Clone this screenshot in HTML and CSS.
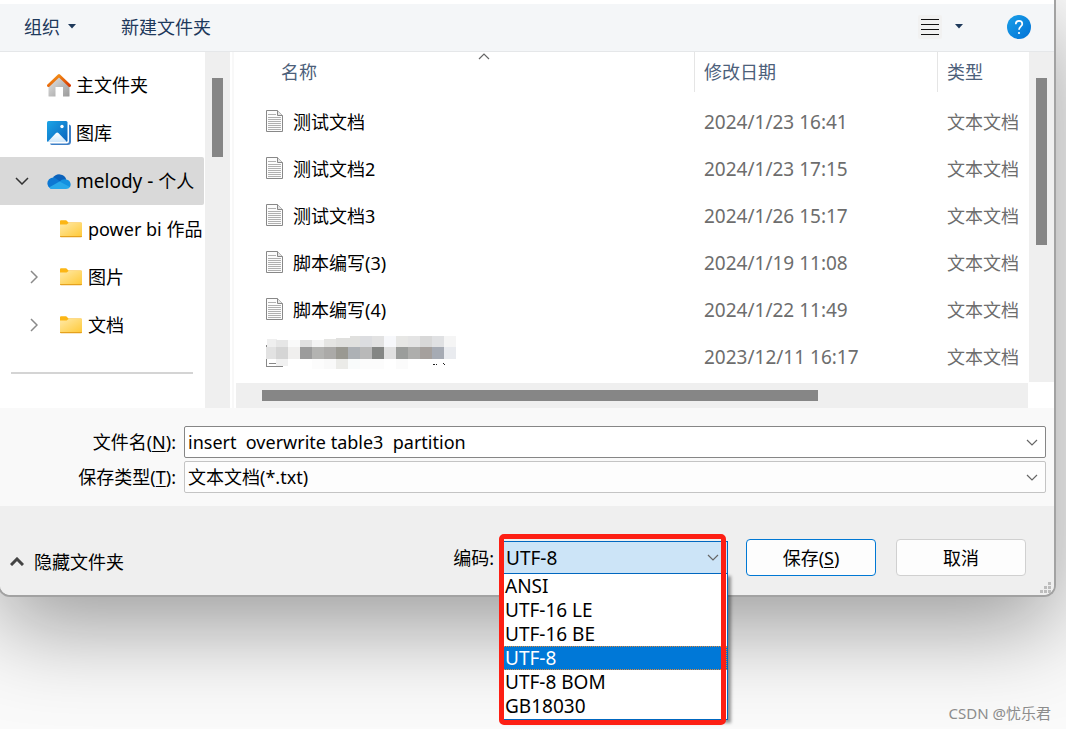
FILE: index.html
```html
<!DOCTYPE html>
<html lang="zh-CN">
<head>
<meta charset="utf-8">
<title>另存为</title>
<link rel="stylesheet" href="styles.css">
</head>
<body>
<svg class="defs" aria-hidden="true">
  <defs>
    <linearGradient id="gFolder" x1="0" y1="0" x2="1" y2="1"><stop offset="0" stop-color="#ffe9a6"/><stop offset="1" stop-color="#ffca3a"/></linearGradient>
    <linearGradient id="gRoof" x1="0" y1="0" x2="1" y2="1"><stop offset="0" stop-color="#f9a01b"/><stop offset="1" stop-color="#d83b01"/></linearGradient>
    <linearGradient id="gWall" x1="0" y1="0" x2="1" y2="1"><stop offset="0" stop-color="#e6e6e6"/><stop offset="1" stop-color="#9a9a9a"/></linearGradient>
    <linearGradient id="gBlue" x1="0" y1="0" x2="1" y2="1"><stop offset="0" stop-color="#1ba4e6"/><stop offset="1" stop-color="#0a63bd"/></linearGradient>
    <linearGradient id="gHelp" x1="0" y1="0" x2="1" y2="1"><stop offset="0" stop-color="#1ba0e8"/><stop offset="1" stop-color="#0071d6"/></linearGradient>
    <linearGradient id="gSnow" x1="0" y1="0" x2="0" y2="1"><stop offset="0" stop-color="#ffffff"/><stop offset="1" stop-color="#cfe8fb"/></linearGradient>
    <symbol id="folder" viewBox="0 0 22 18">
      <path d="M0 1.2Q0 .3 1 .3H6.2L8.5 2.4H21Q22 2.4 22 3.4V8H0Z" fill="#fcb615"/>
      <path d="M0 4.6H6.6L8.6 3.1H22V16H0Z" fill="url(#gFolder)"/>
      <path d="M0 16H22V16.4Q22 17.2 21 17.2H1Q0 17.2 0 16.4Z" fill="#e5a11d"/>
    </symbol>
    <symbol id="doc" viewBox="0 0 18 23">
      <path d="M1.5 .5H12.500L17.500 5.500V21.500H1.500Z" fill="#fcfcfc" stroke="#888"/>
      <path d="M12.500 .5V5.500H17.500" fill="#e4e4e4" stroke="#888"/>
      <path d="M3 4.500H11M3 7.500H16M3 9.500H16M3 11.500H16M3 13.500H16M3 15.500H16M3 17.500H16M3 19.500H16" stroke="#b0b0b0"/>
    </symbol>
  </defs>
</svg>

<main class="dialog">
  <header class="toolbar">
    <button class="tool" type="button">组织<svg class="caret" viewBox="0 0 8 5"><path d="M0 0H8L4 4.6Z"/></svg></button>
    <button class="tool new-folder" type="button">新建文件夹</button>
    <button class="tool view" type="button" aria-label="视图">
      <svg class="view-icon" viewBox="0 0 24 24"><rect width="24" height="24" rx="2" fill="#f1f1f1"/><path d="M3 4.5H21M3 9.5H21M3 14.5H21M3 19.5H21" stroke="#111"/></svg>
      <svg class="caret" viewBox="0 0 8 5"><path d="M0 0H8L4 4.6Z"/></svg>
    </button>
    <button class="tool help" type="button" aria-label="帮助">
      <svg class="help-icon" viewBox="0 0 24 24"><circle cx="12" cy="12" r="12" fill="url(#gHelp)"/><path d="M8.8 9.3C8.8 7 10.2 5.9 12 5.9S15.3 7 15.3 8.9C15.3 11.3 12 11.6 12 14.8" fill="none" stroke="#fff" stroke-width="1.7"/><circle cx="12" cy="18" r="1.1" fill="#fff"/></svg>
    </button>
  </header>

  <section class="browser">
    <nav class="tree">
      <a class="node" href="#"><span class="arrow"></span>
        <svg class="node-icon" viewBox="0 0 24 24"><path d="M1.500 12L12 2.500L22.500 12V23Q22.500 23.500 22 23.500H16V14H8.500V23.500H2Q1.500 23.500 1.500 23Z" fill="url(#gWall)"/><path d="M1.500 12.500L12 2.500L22.500 12.500" fill="none" stroke="url(#gRoof)" stroke-width="3" stroke-linejoin="round" stroke-linecap="round"/></svg>主文件夹</a>
      <a class="node" href="#"><span class="arrow"></span>
        <svg class="node-icon" viewBox="0 0 24 24"><path d="M22 3.500Q24 4 24 5.500V20.500Q24 24 20.500 24H5Q3.500 24 3 22.500H19.500Q22 22.500 22 20Z" fill="#3d7fc6"/><rect width="20.500" height="21" rx="1.500" fill="url(#gBlue)"/><path d="M1 20.500L9 12Q10.200 10.800 11.400 12L19.600 20.500Q19.300 21 18.500 21H2Q1.300 21 1 20.500Z" fill="url(#gSnow)"/><circle cx="15" cy="5.500" r="1.700" fill="#fff"/></svg>图库</a>
      <a class="node selected" href="#"><span class="arrow"><svg class="down" viewBox="0 0 14 8"><path d="M1 1L7 7L13 1"/></svg></span>
        <svg class="node-icon" viewBox="0 0 24 24"><path d="M6 9A7.300 7.300 0 0 1 19.300 10.500L12 15Z" fill="#0b62bb"/><path d="M5.500 20A5.700 5.700 0 1 1 9 9.400L19 17Z" fill="#0d78d3"/><path d="M12.500 12.500Q15.500 9.700 19 10.500A5 5 0 0 1 23 18L16 18Z" fill="#1490df"/><path d="M2 18.500L12.500 12.500L23 18Q21.800 20 19 20H5.500Q3.300 20 2 18.500Z" fill="#28a8ea"/></svg><span class="latin">melody - </span>个人</a>
      <a class="node child" href="#"><span class="arrow"></span><svg class="folder-icon"><use href="#folder"/></svg>power bi 作品</a>
      <a class="node child" href="#"><span class="arrow"><svg class="right" viewBox="0 0 8 14"><path d="M1 1L7 7L1 13"/></svg></span><svg class="folder-icon"><use href="#folder"/></svg>图片</a>
      <a class="node child" href="#"><span class="arrow"><svg class="right" viewBox="0 0 8 14"><path d="M1 1L7 7L1 13"/></svg></span><svg class="folder-icon"><use href="#folder"/></svg>文档</a>
      <hr class="rule">
    </nav>
    <div class="vbar tree-bar"><div class="thumb"></div></div>

    <div class="files">
      <div class="list-row">
        <table class="list">
          <colgroup><col><col class="c-date"><col class="c-type"></colgroup>
          <thead>
            <tr>
              <th scope="col" class="h-name"><div class="head">名称</div><svg class="sort" viewBox="0 0 12 7"><path d="M1 6L6 1L11 6"/></svg></th>
              <th scope="col"><div class="head">修改日期</div></th>
              <th scope="col"><div class="head">类型</div></th>
            </tr>
          </thead>
          <tbody>
            <tr><td><div class="name"><svg class="doc-icon"><use href="#doc"/></svg>测试文档</div></td><td class="latin">2024/1/23 16:41</td><td>文本文档</td></tr>
            <tr><td><div class="name"><svg class="doc-icon"><use href="#doc"/></svg>测试文档2</div></td><td class="latin">2024/1/23 17:15</td><td>文本文档</td></tr>
            <tr><td><div class="name"><svg class="doc-icon"><use href="#doc"/></svg>测试文档3</div></td><td class="latin">2024/1/26 15:17</td><td>文本文档</td></tr>
            <tr><td><div class="name"><svg class="doc-icon"><use href="#doc"/></svg>脚本编写(3)</div></td><td class="latin">2024/1/19 11:08</td><td>文本文档</td></tr>
            <tr><td><div class="name"><svg class="doc-icon"><use href="#doc"/></svg>脚本编写(4)</div></td><td class="latin">2024/1/22 11:49</td><td>文本文档</td></tr>
            <tr><td><div class="name">
              <svg class="mosaic" viewBox="0 0 192 41" shape-rendering="crispEdges">
                <path d="M1.500 9V30.500H18M4 27.500H11" fill="none" stroke="#888"/>
                <g>
                  <rect x="2" y="3" width="10" height="8" fill="#efefef"/><rect x="11" y="4" width="12" height="7" fill="#e6e6e6"/><rect x="23" y="4" width="12" height="7" fill="#fafafa"/><rect x="35" y="4" width="12" height="7" fill="#e1e1e1"/><rect x="47" y="4" width="12" height="7" fill="#f4f4f4"/><rect x="59" y="3" width="12" height="8" fill="#e5e5e3"/><rect x="71" y="2" width="14" height="9" fill="#e0e0de"/><rect x="85" y="0" width="10" height="11" fill="#e0e0de"/><rect x="95" y="0" width="12" height="11" fill="#dcdde0"/><rect x="107" y="0" width="12" height="11" fill="#e2e2e2"/><rect x="119" y="0" width="12" height="11" fill="#f7f8fb"/><rect x="131" y="0" width="12" height="11" fill="#e7e7e5"/><rect x="143" y="0" width="12" height="11" fill="#e4e4e4"/><rect x="155" y="0" width="12" height="11" fill="#d8d8d8"/><rect x="167" y="0" width="12" height="11" fill="#e0e1e3"/><rect x="179" y="0" width="12" height="11" fill="#f5f5f5"/>
                </g>
                <g>
                  <rect x="1" y="11" width="10" height="12" fill="#e2e2e2"/><rect x="11" y="11" width="12" height="12" fill="#d5d5d5"/><rect x="23" y="11" width="12" height="12" fill="#f0efee"/><rect x="35" y="11" width="12" height="12" fill="#9c9c9c"/><rect x="47" y="11" width="12" height="12" fill="#b3b3b1"/><rect x="59" y="11" width="12" height="12" fill="#abaaa8"/><rect x="71" y="11" width="12" height="12" fill="#9a9992"/><rect x="83" y="11" width="12" height="12" fill="#adb1b5"/><rect x="95" y="11" width="12" height="12" fill="#b9b9b9"/><rect x="107" y="11" width="12" height="12" fill="#848684"/><rect x="119" y="11" width="12" height="12" fill="#e0e0e0"/><rect x="131" y="11" width="12" height="12" fill="#9b9d9b"/><rect x="143" y="11" width="12" height="12" fill="#aeaeac"/><rect x="155" y="11" width="12" height="12" fill="#a5a09d"/><rect x="167" y="11" width="12" height="12" fill="#a6abb4"/><rect x="179" y="11" width="12" height="12" fill="#e9ebef"/>
                </g>
                <g>
                  <rect x="11" y="23" width="12" height="7" fill="#f1f1f1"/><rect x="47" y="23" width="12" height="10" fill="#fcfcfc"/><rect x="59" y="23" width="12" height="10" fill="#f9f9f9"/><rect x="71" y="23" width="12" height="10" fill="#ebebe8"/><rect x="83" y="23" width="12" height="10" fill="#f9fbfb"/><rect x="95" y="23" width="24" height="10" fill="#fcfcfc"/><rect x="131" y="23" width="12" height="10" fill="#fbfbfb"/>
                  <path d="M168 28.500H170M171 28.500H172M178 27.500H179M179 28.500H180" stroke="#222"/>
                </g>
              </svg></div></td><td class="latin">2023/12/11 16:17</td><td>文本文档</td></tr>
          </tbody>
        </table>
        <div class="vbar list-bar"><div class="thumb"></div></div>
      </div>
      <div class="hbar"><div class="thumb"></div></div>
    </div>
  </section>

  <section class="fields">
    <label class="label" for="fname">文件名(<u>N</u>):</label>
    <div class="combo strong">
      <input id="fname" type="text" value="insert  overwrite table3  partition">
      <svg class="drop" viewBox="0 0 12 7"><path d="M1 1L6 6L11 1"/></svg>
    </div>
    <label class="label" for="ftype">保存类型(<u>T</u>):</label>
    <div class="combo">
      <select id="ftype"><option>文本文档(*.txt)</option></select>
      <svg class="drop" viewBox="0 0 12 7"><path d="M1 1L6 6L11 1"/></svg>
    </div>
  </section>

  <footer class="footer">
    <button class="hide-folders" type="button"><svg class="up" viewBox="0 0 14 9"><path d="M1 8L7 2L13 8"/></svg>隐藏文件夹</button>
    <label class="enc-label" for="enc">编码:</label>
    <div class="encoding latin">
      <div class="enc-box">
        <select id="enc"><option>UTF-8</option></select>
        <svg class="drop" viewBox="0 0 12 7"><path d="M1 1L6 6L11 1"/></svg>
      </div>
      <ul class="options" role="listbox" aria-label="编码">
        <li role="option">ANSI</li>
        <li role="option">UTF-16 LE</li>
        <li role="option">UTF-16 BE</li>
        <li role="option" class="active" aria-selected="true">UTF-8</li>
        <li role="option">UTF-8 BOM</li>
        <li role="option">GB18030</li>
      </ul>
      <div class="marker"></div>
    </div>
    <button class="btn primary" type="button">保存(<u>S</u>)</button>
    <button class="btn" type="button">取消</button>
    <svg class="grip" viewBox="0 0 11 11"><path d="M8 0h3v3h-3zM4 4h3v3h-3zM8 4h3v3h-3zM0 8h3v3h-3zM4 8h3v3h-3zM8 8h3v3h-3z"/></svg>
  </footer>
</main>
<p class="credit">CSDN @忧乐君</p>
</body>
</html>
```

FILE: styles.css
```css
* { box-sizing: border-box; }

body {
  margin: 0;
  min-height: 100vh;
  display: flex;
  flex-direction: column;
  overflow: hidden;
  background: #fafafa;
  color: #000;
  font: 18px/24px "Noto Sans", "Noto Sans CJK SC", sans-serif;
}

button, input, select {
  margin: 0;
  padding: 0;
  border: 0;
  background: none;
  color: inherit;
  font: inherit;
  appearance: none;
}

u { text-underline-offset: 2px; text-decoration-thickness: 1px; }

svg { display: block; flex: none; }
.defs { position: absolute; width: 0; height: 0; }
.latin { font-size: 19px; white-space: pre; }

.dialog {
  margin: 0 10px 0 -2px;
  padding-top: 4px;
  border: 2px solid #a2a2a2;
  border-top: 0;
  border-radius: 0 0 12px 12px;
  background: #fff;
  box-shadow: 0 30px 90px rgba(0, 0, 0, 0.38);
}

/* toolbar */
.toolbar {
  display: flex;
  align-items: center;
  height: 48px;
  padding: 0 23px 2px 24px;
  border-bottom: 1px solid #e5e7e9;
  background: #f4f6f8;
  color: #1e395b;
}
.tool { display: flex; align-items: center; }
.caret { width: 8px; height: 5px; margin-left: 8px; fill: #1e395b; }
.new-folder { margin-left: 45px; }
.view { margin-left: auto; }
.view-icon { width: 24px; height: 24px; }
.view .caret { margin-left: 13px; }
.help { margin-left: 44px; }
.help-icon { width: 24px; height: 24px; }

/* folder tree */
.browser { display: flex; }
.tree {
  width: 205px;
  flex: none;
  padding-top: 9px;
  overflow: hidden;
}
.node {
  display: flex;
  align-items: center;
  height: 48px;
  color: #000;
  text-decoration: none;
  white-space: nowrap;
}
.selected {
  margin-right: 1px;
  border-radius: 0 2px 2px 0;
  background: #d9d9d9;
}
.arrow { width: 47px; flex: none; padding-left: 15px; }
.child .arrow { width: 60px; padding-left: 30px; }
.arrow path { fill: none; stroke: #333; stroke-width: 1.5; }
.child .arrow path { stroke: #8a8a8a; }
.down { width: 14px; height: 8px; }
.right { width: 8px; height: 14px; }
.node-icon { width: 24px; height: 24px; margin-right: 5px; }
.folder-icon { width: 22px; height: 18px; margin-right: 6px; }
.rule {
  height: 2px;
  margin: 23px 12px 0 11px;
  border: 0;
  background: #d4d4d4;
}

/* scroll bars */
.vbar { width: 25px; flex: none; padding: 26px 7px 0; background: #efefef; }
.thumb { background: #868686; }
.tree-bar .thumb { height: 79px; }
.list-bar .thumb { height: 167px; }
.hbar {
  height: 25px;
  margin: 1px 26px 0 0;
  padding: 7px 210px 7px 26px;
  background: #efefef;
}
.hbar .thumb { height: 11px; }

/* file list */
.files {
  flex: 1;
  min-width: 0;
  margin-left: 2px;
  padding-left: 2px;
  border-left: 2px solid #f8f8f8;
}
.list-row { display: flex; min-height: 330px; }
.list {
  flex: 1;
  align-self: flex-start;
  table-layout: fixed;
  width: 100%;
  border-collapse: collapse;
  color: #6d6d6d;
}
.c-date { width: 243px; }
.c-type { width: 92px; }
th {
  position: relative;
  height: 46px;
  padding: 0 0 6px;
  font-weight: 400;
  text-align: left;
  color: #4c607a;
}
.head {
  height: 40px;
  padding: 8px 0 0 9px;
  border-left: 1px solid #e5e5e5;
}
.h-name .head { padding-left: 45px; border: 0; }
.sort {
  position: absolute;
  top: 1px;
  left: 242px;
  width: 12px;
  height: 7px;
}
.sort path, .drop path { fill: none; stroke: #666; stroke-width: 1.2; }
td { height: 47px; padding: 0 0 0 10px; white-space: nowrap; }
.name { display: flex; align-items: center; padding-left: 19px; color: #000; }
.doc-icon { width: 18px; height: 23px; margin-right: 10px; }
.mosaic { width: 192px; height: 41px; }

/* name and type fields */
.fields {
  display: grid;
  grid-template-columns: 176px 1fr;
  gap: 3px 8px;
  align-items: center;
  padding: 18px 8px 13px 0;
  background: #f9f9f9;
}
.label { text-align: right; }
.combo {
  display: flex;
  align-items: center;
  height: 32px;
  padding: 0 7px 0 3px;
  border: 1px solid #c4c4c4;
  border-radius: 2px;
  background: #fdfdfd;
}
.strong { border-color: #868686; background: #fff; }
.combo input, .combo select, .enc-box select { flex: 1; min-width: 0; }
.drop { width: 12px; height: 7px; pointer-events: none; }

/* footer */
.footer {
  position: relative;
  display: flex;
  align-items: center;
  height: 89px;
  padding: 14px 28px 0 10px;
  border-radius: 0 0 10px 10px;
  background: #efefef;
}
.hide-folders { display: flex; align-items: center; margin-top: 8px; }
.up { width: 14px; height: 9px; margin-right: 10px; }
.up path { fill: none; stroke: #444; stroke-width: 3; }
.enc-label { margin-left: auto; }
.encoding { position: relative; width: 227px; margin: 0 18px 0 7px; white-space: normal; }
.enc-box {
  display: flex;
  align-items: center;
  height: 33px;
  padding: 0 8px 0 4px;
  border: 1px solid #0067c0;
  background: #cce4f7;
}
.options {
  position: absolute;
  top: 32px;
  left: 0;
  right: 0;
  margin: 0;
  padding: 0 0 1px;
  border: 1px solid #0067c0;
  background: #fff;
  box-shadow: 3px 3px 3px rgba(0, 0, 0, 0.4);
  list-style: none;
}
.options li { padding-left: 3px; }
.options .active {
  background: #0078d7;
  color: #fff;
  outline: 1px dotted #e08a3c;
  outline-offset: -1px;
}
.marker {
  position: absolute;
  top: -7px;
  left: -2px;
  width: 227px;
  height: 191px;
  border: 5px solid #fd1f14;
  border-radius: 5px;
  pointer-events: none;
}
.btn {
  width: 130px;
  height: 37px;
  border: 1px solid #d0d0d0;
  border-radius: 4px;
  background: #fdfdfd;
}
.btn + .btn { margin-left: 20px; }
.primary { border-color: #0078d4; }
.grip {
  position: absolute;
  right: 3px;
  bottom: 2px;
  width: 11px;
  height: 11px;
  fill: #bdbdbd;
}

.credit {
  margin: auto 15px 4px auto;
  color: #8c8c8c;
  font-size: 15px;
}
```
